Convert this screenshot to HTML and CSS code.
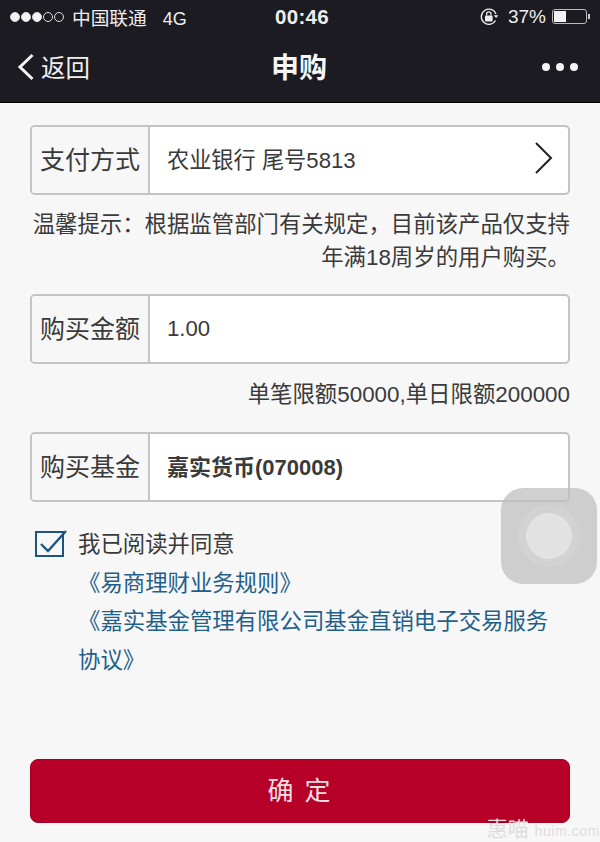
FILE: index.html
```html
<!DOCTYPE html>
<html lang="zh-CN">
<head>
  <meta charset="UTF-8">
  <meta name="viewport" content="width=device-width, initial-scale=1">
  <title>申购</title>
  <link rel="stylesheet" href="styles.css">
</head>
<body>
  <div class="page">
    <header class="top">
      <div class="status">
        <div class="status-left">
          <span class="signal">
            <i class="on"></i><i class="on"></i><i class="on"></i><i></i><i></i>
          </span>
          <span class="carrier">中国联通</span>
          <span class="net">4G</span>
        </div>
        <div class="time">00:46</div>
        <div class="status-right">
          <svg class="lock" width="20" height="20" viewBox="0 0 20 20">
            <path d="M16.5 13.5A7.6 7.6 0 1 1 17 7" fill="none" stroke="#eee" stroke-width="1.3"/>
            <path d="M14.8 8.2h4.6l-2.3 2.8z" fill="#eee"/>
            <rect x="6" y="8.6" width="7.6" height="5.8" rx="1" fill="#eee"/>
            <path d="M7.6 8.6V7a2.2 2.2 0 0 1 4.4 0v1.6" fill="none" stroke="#eee" stroke-width="1.2"/>
          </svg>
          <span class="percent">37%</span>
          <span class="battery"><span class="battery-level"></span></span>
        </div>
      </div>
      <nav class="nav">
        <div class="back">
          <svg width="18" height="28" viewBox="0 0 18 28">
            <path d="M15.5 2 3 14l12.5 12" fill="none" stroke="#f4f4f4" stroke-width="3"/>
          </svg>
          <span>返回</span>
        </div>
        <h1 class="title">申购</h1>
        <div class="more"><i></i><i></i><i></i></div>
      </nav>
    </header>

    <main class="content">
      <div class="field">
        <div class="field-label">支付方式</div>
        <div class="field-value">
          <span>农业银行 尾号5813</span>
          <svg class="arrow" width="20" height="34" viewBox="0 0 20 34">
            <path d="M2 2l15 15L2 32" fill="none" stroke="#222" stroke-width="2"/>
          </svg>
        </div>
      </div>
      <p class="tip">温馨提示&#65306;根据监管部门有关规定&#65292;目前该产品仅支持<br>年满18周岁的用户购买。</p>

      <div class="field field-amount">
        <div class="field-label">购买金额</div>
        <div class="field-value amount-value">1.00</div>
      </div>
      <p class="limit">单笔限额50000,单日限额200000</p>

      <div class="field field-fund">
        <div class="field-label">购买基金</div>
        <div class="field-value fund-name">嘉实货币(070008)</div>
      </div>

      <div class="agree">
        <svg class="check" width="32" height="27" viewBox="0 0 32 27">
          <rect x="1" y="2" width="27" height="24" fill="none" stroke="#1c5680" stroke-width="2"/>
          <path d="M6 14l7 7L31 1" fill="none" stroke="#1c5680" stroke-width="2.4"/>
        </svg>
        <div class="agree-text">
          <div class="agree-line">我已阅读并同意</div>
          <a class="doc">《易商理财业务规则》</a>
          <a class="doc">《嘉实基金管理有限公司基金直销电子交易服务协议》</a>
        </div>
      </div>

      <button class="submit">确 定</button>
    </main>

    <div class="touch"><div class="touch-ring"><div class="touch-dot"></div></div></div>
    <div class="mark">惠喵 <span>huim.com</span></div>
  </div>
</body>
</html>
```

FILE: styles.css
```css
* {
  margin: 0;
  padding: 0;
  box-sizing: border-box;
}
body {
  font-family: "Liberation Sans", "Noto Sans CJK SC", sans-serif;
  background-color: #f7f7f7;
  color: #3a3a3a;
}
.page {
  position: relative;
  width: 600px;
  height: 842px;
  overflow: hidden;
}

/* header */
.top {
  height: 103px;
  background-color: #1c1b22;
  border-bottom: 1px solid #000;
  color: #eee;
}
.status {
  display: grid;
  grid-template-columns: 1fr auto 1fr;
  align-items: center;
  height: 33px;
  padding: 0 10px;
}
.status-left {
  display: flex;
  align-items: baseline;
  font-size: 18.7px;
}
.signal {
  display: flex;
  align-self: center;
  gap: 1px;
  margin-right: 8px;
}
.signal i {
  width: 10px;
  height: 10px;
  border: 1px solid #ddd;
  border-radius: 50%;
}
.signal .on {
  background-color: #f4f4f4;
}
.net {
  margin-left: 16px;
  font-size: 18px;
}
.time {
  font-size: 20.5px;
  font-weight: bold;
  letter-spacing: 0.3px;
  padding-left: 4px;
}
.status-right {
  display: flex;
  align-items: center;
  justify-content: flex-end;
  font-size: 19px;
}
.lock {
  margin-right: 9px;
}
.percent {
  margin-right: 6px;
}
.battery {
  position: relative;
  width: 35px;
  height: 15px;
  border: 1px solid #bbb;
  border-radius: 3px;
  padding: 1px;
  margin-right: 3px;
}
.battery::after {
  content: "";
  position: absolute;
  right: -4px;
  top: 4px;
  width: 2px;
  height: 5px;
  background-color: #ccc;
}
.battery-level {
  display: block;
  width: 12px;
  height: 100%;
  background-color: #f2f2f2;
}
.nav {
  display: grid;
  grid-template-columns: 1fr auto 1fr;
  align-items: center;
  height: 67px;
  padding: 0 22px 0 17px;
}
.back {
  display: flex;
  align-items: center;
  gap: 6px;
  font-size: 24.5px;
}
.title {
  font-size: 28px;
  font-weight: bold;
  color: #f6f6f6;
  padding: 0 0 2px 3px;
}
.more {
  display: flex;
  justify-content: flex-end;
  gap: 6px;
}
.more i {
  width: 8px;
  height: 8px;
  border-radius: 50%;
  background-color: #f4f4f4;
}

/* form */
.content {
  padding: 22px 30px 0;
}
.field {
  display: flex;
  height: 70px;
  border: 2px solid #c4c4c4;
  border-radius: 5px;
  background-color: #fff;
  overflow: hidden;
}
.field-label {
  display: flex;
  align-items: center;
  justify-content: center;
  width: 118px;
  border-right: 2px solid #c4c4c4;
  background-color: #f7f7f7;
  font-size: 25px;
  flex-shrink: 0;
  padding-bottom: 5px;
}
.field-value {
  display: flex;
  align-items: center;
  justify-content: space-between;
  flex: 1;
  padding: 0 14px 4px 17px;
  font-size: 22.2px;
}
.amount-value {
  padding-bottom: 0;
}
.fund-name {
  font-size: 22px;
  font-weight: bold;
}
.tip {
  margin-top: 13px;
  text-align: right;
  font-size: 22.4px;
  line-height: 33px;
  white-space: nowrap;
}
.field-amount {
  margin-top: 20px;
}
.limit {
  margin-top: 16px;
  text-align: right;
  font-size: 22.4px;
  line-height: 30px;
}
.field-fund {
  margin-top: 22px;
}

/* agreement */
.agree {
  display: flex;
  align-items: flex-start;
  margin-top: 28px;
  padding-left: 5px;
}
.check {
  flex-shrink: 0;
  margin-right: 11px;
}
.agree-text {
  width: 472px;
  font-size: 22.4px;
  line-height: 38.6px;
  margin-top: -4px;
}
.doc {
  display: block;
  color: #1f5f8b;
}
.submit {
  display: block;
  width: 100%;
  height: 64px;
  margin-top: 79px;
  padding-bottom: 6px;
  border: 1px solid #a30024;
  border-radius: 8px;
  background-color: #b70027;
  color: #f4dfe2;
  font-family: inherit;
  font-size: 26px;
  letter-spacing: 2px;
}

/* floating touch button */
.touch {
  position: absolute;
  left: 501px;
  top: 488px;
  width: 96px;
  height: 96px;
  border-radius: 22px;
  background-color: rgba(190, 190, 190, 0.72);
  display: flex;
  align-items: center;
  justify-content: center;
}
.touch-ring {
  width: 62px;
  height: 62px;
  border-radius: 50%;
  background-color: #d2d2d2;
  display: flex;
  align-items: center;
  justify-content: center;
}
.touch-dot {
  width: 46px;
  height: 46px;
  border-radius: 50%;
  background-color: #e2e2e2;
}
.mark {
  position: absolute;
  right: 0;
  bottom: -1px;
  font-size: 21px;
  line-height: 24px;
  color: #dedede;
  white-space: nowrap;
}
.mark span {
  font-size: 14px;
  letter-spacing: 0.6px;
}
```
